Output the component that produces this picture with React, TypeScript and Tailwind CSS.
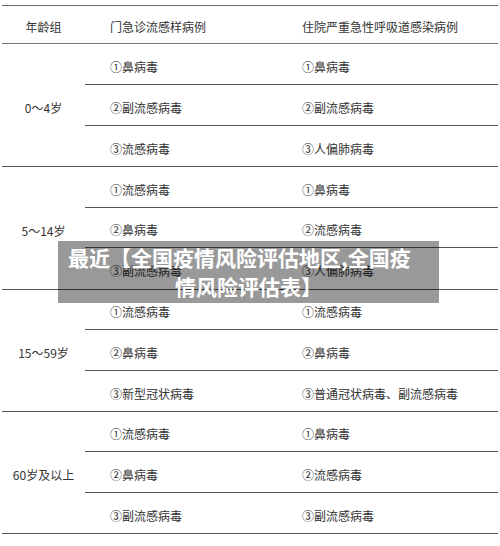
const groups = [
  {
    age: '0～4岁',
    rows: [
      { h: 'h-[41px]', a: '①鼻病毒', b: '①鼻病毒' },
      { h: 'h-[41px]', a: '②副流感病毒', b: '②副流感病毒' },
      { h: 'h-[40px]', a: '③流感病毒', b: '③人偏肺病毒' },
    ],
  },
  {
    age: '5～14岁',
    rows: [
      { h: 'h-[41px]', a: '①流感病毒', b: '①鼻病毒' },
      { h: 'h-[40px]', a: '②鼻病毒', b: '②流感病毒' },
      { h: 'h-[41px]', a: '③副流感病毒', b: '③人偏肺病毒' },
    ],
  },
  {
    age: '15～59岁',
    rows: [
      { h: 'h-[40px]', a: '①流感病毒', b: '①流感病毒' },
      { h: 'h-[41px]', a: '②鼻病毒', b: '②鼻病毒' },
      { h: 'h-[40px]', a: '③新型冠状病毒', b: '③普通冠状病毒、副流感病毒' },
    ],
  },
  {
    age: '60岁及以上',
    rows: [
      { h: 'h-[40px]', a: '①流感病毒', b: '①鼻病毒' },
      { h: 'h-[41px]', a: '②鼻病毒', b: '②流感病毒' },
      { h: 'h-[40px]', a: '③副流感病毒', b: '③副流感病毒' },
    ],
  },
];

export default function App() {
  return (
    <div
      className="relative h-[546px] w-[500px] overflow-hidden bg-white pt-[5px] text-[12px] text-[#333]"
      style={{ fontFamily: '"Noto Sans CJK SC", "Noto Sans", sans-serif' }}
    >
      <div className="mx-[2px] border-t border-[#666]">
        {/* header */}
        <div className="flex h-[38px] items-center border-b border-[#777] pt-[5px]">
          <div className="w-[83px] text-center">年龄组</div>
          <div className="w-[192px] pl-[25px]">门急诊流感样病例</div>
          <div className="flex-1 pl-[25px]">住院严重急性呼吸道感染病例</div>
        </div>

        {groups.map((group) => (
          <div key={group.age} className="flex border-b border-[#555]">
            <div className="flex w-[83px] items-center justify-center pt-[5px]">{group.age}</div>
            <div className="flex-1">
              {group.rows.map((row, i) => (
                <div
                  key={row.a + i}
                  className={`flex items-center pt-[5px] ${row.h} ${
                    i < group.rows.length - 1 ? 'border-b border-[#555]' : ''
                  }`}
                >
                  <div className="w-[192px] pl-[25px]">{row.a}</div>
                  <div className="flex-1 pl-[25px]">{row.b}</div>
                </div>
              ))}
            </div>
          </div>
        ))}
      </div>

      {/* caption overlay */}
      <div className="absolute left-[58px] top-[241px] w-[381px] bg-black/40 py-[2px] text-[21px] font-bold leading-[29px] text-white">
        <div className="whitespace-nowrap pl-[10px]">最近【全国疫情风险评估地区,全国疫</div>
        <div className="text-center">情风险评估表】</div>
      </div>
    </div>
  );
}
